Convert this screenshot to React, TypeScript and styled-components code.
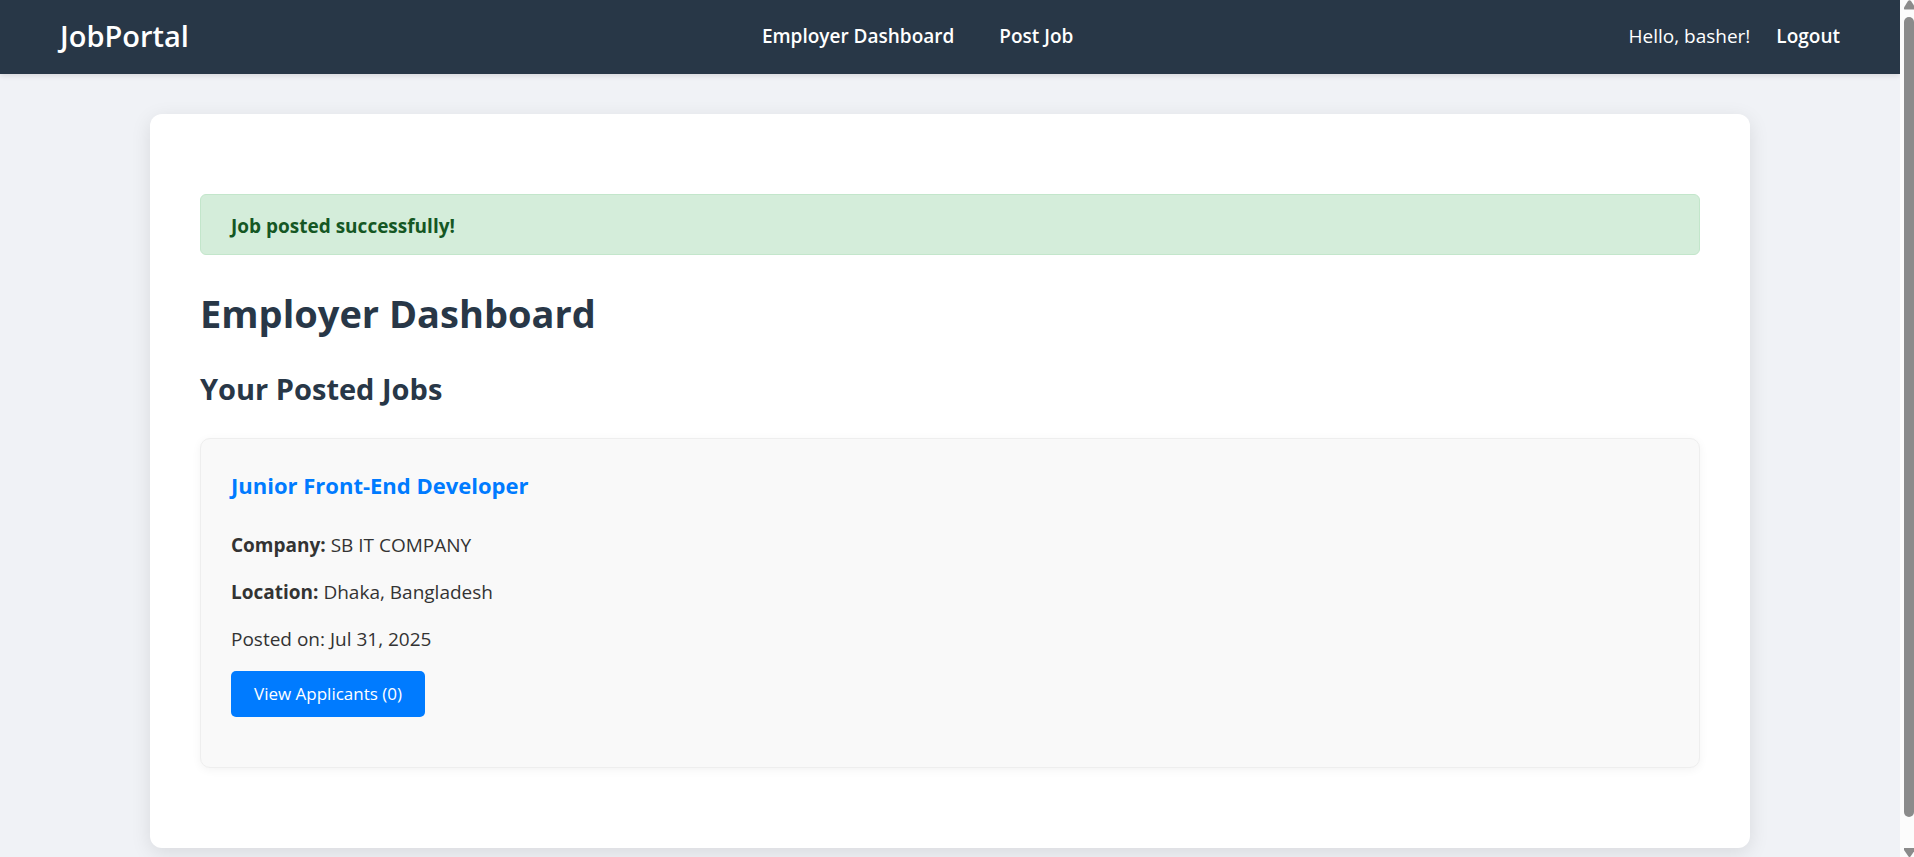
import React from 'react';
import styled, { createGlobalStyle } from 'styled-components';

const GlobalStyle = createGlobalStyle`
  *, *::before, *::after { box-sizing: border-box; }
  body {
    margin: 0;
    background: #f0f2f6;
    color: #333;
    font-family: 'Segoe UI', 'Open Sans', 'Noto Sans', sans-serif;
    font-size: 19px;
    line-height: 31px;
  }
  h1, h2, h3, p { margin: 0; }
  a { color: inherit; text-decoration: none; }
`;

const Shell = styled.div`
  display: flex;
  height: 100vh;
`;

const Viewport = styled.div`
  flex: 1;
  min-width: 0;
  overflow-y: auto;
  scrollbar-width: none;
`;

const Header = styled.header`
  display: grid;
  grid-template-columns: auto 1fr auto;
  align-items: center;
  padding: 16px 60px 18px;
  background: #283747;
  color: #fff;
  line-height: 40px;
  box-shadow: 0 2px 5px rgba(0, 0, 0, 0.1);
`;

const Brand = styled.a`
  font-size: 29px;
  font-weight: 600;
`;

const Nav = styled.nav`
  display: flex;
  justify-content: center;
  gap: 45px;
  padding-left: 18px;
`;

const NavLink = styled.a`
  font-weight: 600;
`;

const Account = styled.div`
  display: flex;
  gap: 26px;
`;

const Panel = styled.main`
  max-width: 1600px;
  margin: 40px auto;
  padding: 80px 50px;
  background: #fff;
  border-radius: 12px;
  box-shadow: 0 5px 20px rgba(0, 0, 0, 0.1);
`;

const Alert = styled.div`
  padding: 17px 30px 13px;
  border: 1px solid #c3e6cb;
  border-radius: 6px;
  background: #d4edda;
  color: #155724;
  font-weight: 700;
  line-height: 29px;
`;

const PageTitle = styled.h1`
  margin-top: 34px;
  color: #283747;
  font-size: 38px;
  line-height: 48px;
`;

const SectionTitle = styled.h2`
  margin: 32px 0 29px;
  color: #283747;
  font-size: 29px;
  line-height: 40px;
`;

const JobCard = styled.article`
  display: flex;
  flex-direction: column;
  align-items: flex-start;
  gap: 16px;
  padding: 30px 30px 50px;
  border: 1px solid #eee;
  border-radius: 10px;
  background: #f9f9f9;
  box-shadow: 0 2px 10px rgba(0, 0, 0, 0.05);
`;

const JobTitle = styled.h3`
  margin-bottom: 13px;
  color: #007bff;
  font-size: 22px;
  line-height: 32px;
`;

const ActionLink = styled.a`
  padding: 8px 23px;
  border-radius: 5px;
  background: #007bff;
  color: #fff;
  font-size: 17px;
  line-height: 30px;
`;

const ScrollRail = styled.div`
  display: flex;
  flex-direction: column;
  align-items: flex-end;
  flex: 0 0 14px;
  overflow: hidden;
  background: #fcfcfc;
`;

const ScrollThumb = styled.div`
  flex: 1;
  width: 10px;
  margin: 7px 0 31px;
  border-radius: 5px;
  background: #8b8b8b;
`;

const Arrow = styled.svg`
  display: block;
  flex: none;
  fill: #8b8b8b;
`;

const jobs = [
  {
    title: 'Junior Front-End Developer',
    company: 'SB IT COMPANY',
    location: 'Dhaka, Bangladesh',
    posted: 'Jul 31, 2025',
    applicants: 0,
  },
];

export default function App() {
  return (
    <>
      <GlobalStyle />
      <Shell>
        <Viewport>
          <Header>
            <Brand href="#home">JobPortal</Brand>
            <Nav>
              <NavLink href="#dashboard">Employer Dashboard</NavLink>
              <NavLink href="#post">Post Job</NavLink>
            </Nav>
            <Account>
              <span>Hello, basher!</span>
              <NavLink href="#logout">Logout</NavLink>
            </Account>
          </Header>
          <Panel>
            <Alert role="status">Job posted successfully!</Alert>
            <PageTitle>Employer Dashboard</PageTitle>
            <SectionTitle>Your Posted Jobs</SectionTitle>
            {jobs.map((job) => (
              <JobCard key={job.title}>
                <JobTitle>{job.title}</JobTitle>
                <p><strong>Company:</strong> {job.company}</p>
                <p><strong>Location:</strong> {job.location}</p>
                <p>Posted on: {job.posted}</p>
                <ActionLink href="#applicants">View Applicants ({job.applicants})</ActionLink>
              </JobCard>
            ))}
          </Panel>
        </Viewport>
        <ScrollRail aria-hidden="true">
          <Arrow width="10" height="10" viewBox="0 0 10 10">
            <path d="M4 1Q5.500-.5 7 1L11 7Q11.500 9.500 10 9.500H1Q-.5 9.500 0 7.500Z" />
          </Arrow>
          <ScrollThumb />
          <Arrow width="10" height="9" viewBox="0 0 10 9">
            <path d="M0 0H11V2L6.500 8.500Q5.500 9.500 4.500 8.500L0 2Z" />
          </Arrow>
        </ScrollRail>
      </Shell>
    </>
  );
}
